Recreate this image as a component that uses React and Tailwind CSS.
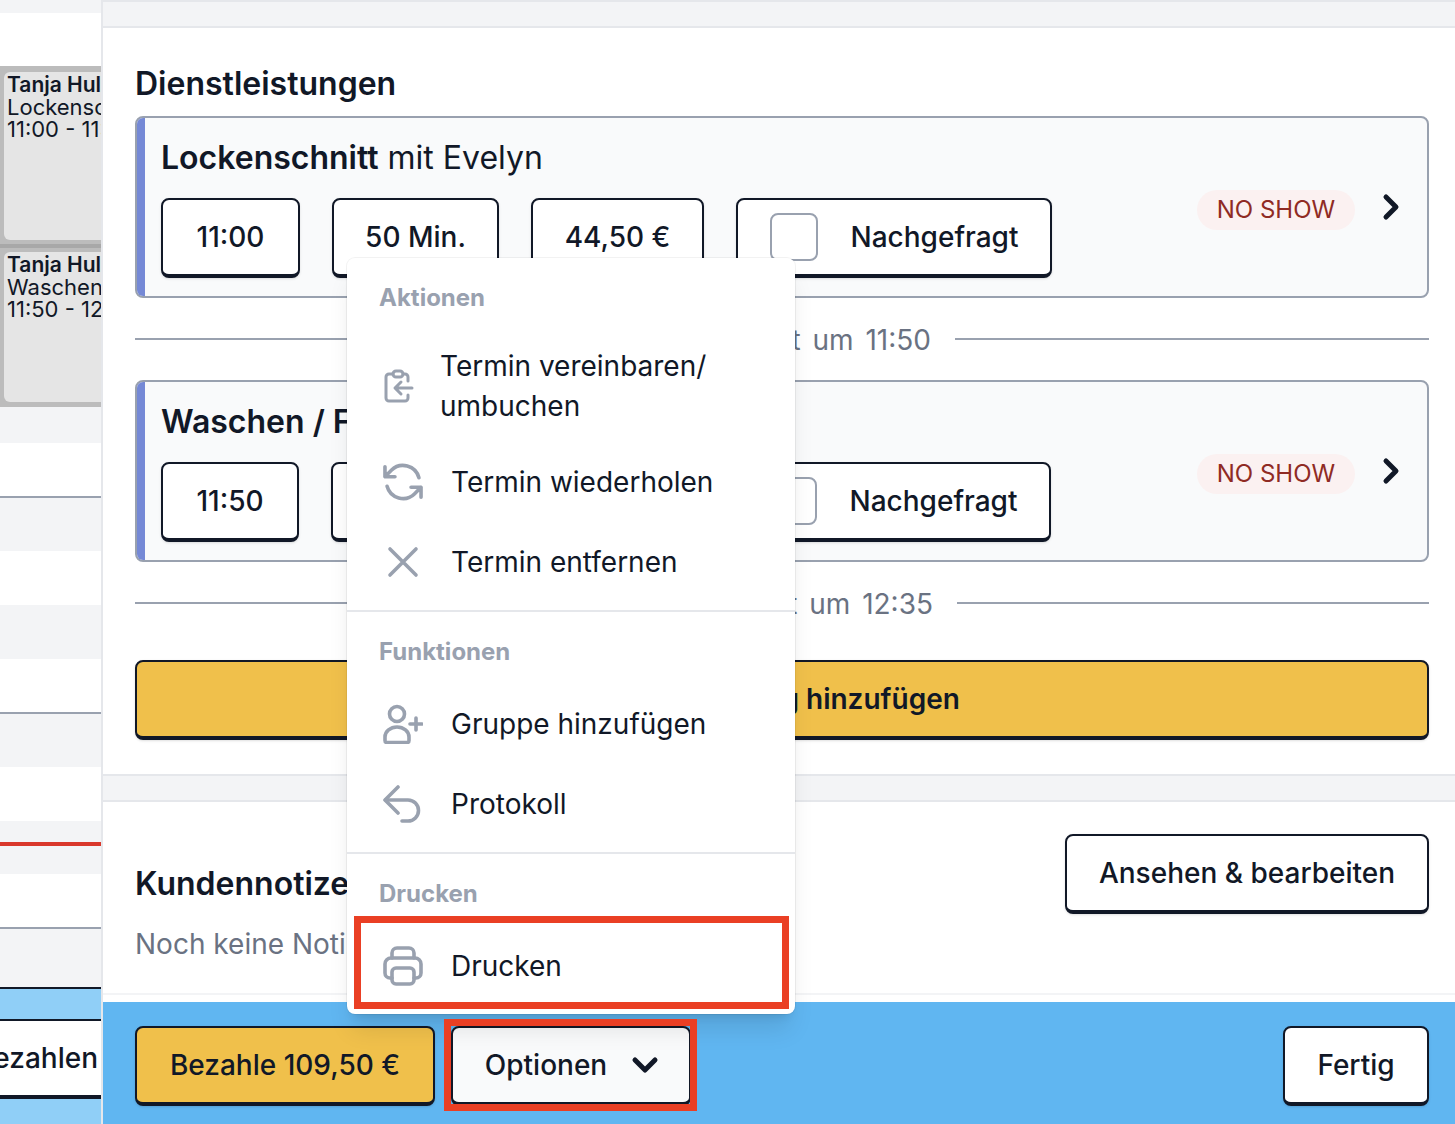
import { ChevronDown, ChevronRight } from "lucide-react";
import { HiOutlineArrowPath } from "react-icons/hi2";

const Btn = ({ className = "bg-white", children }) => (
  <div className={`flex h-[80px] shrink-0 items-center justify-center whitespace-nowrap rounded-lg border-2 border-b-4 border-[#111827] text-[28px] leading-[40px] font-medium text-[#111827] shadow-sm ${className}`}>
    {children}
  </div>
);

const ServiceCard = ({ title, rest, time, duration, price, timeWidth, checkWidth }) => (
  <div className="flex h-[182px] overflow-hidden rounded-lg border-2 border-gray-400 bg-gray-50">
    <div className="w-[8px] shrink-0 bg-[#7589d6]" />
    <div className="flex-1 pt-[20px] pl-[16px]">
      <div className="text-[32px] leading-[40px] text-[#111827]">
        <span className="font-semibold">{title}</span> {rest}
      </div>
      <div className="mt-[20px] flex gap-[32px]">
        <Btn className={`bg-white ${timeWidth}`}>{time}</Btn>
        <Btn className="w-[167px] bg-white">{duration}</Btn>
        <Btn className="w-[173px] bg-white">{price}</Btn>
        <Btn className={`gap-[33px] bg-white ${checkWidth}`}>
          <span className="h-[48px] w-[48px] rounded-lg border-2 border-gray-400 bg-white" />
          Nachgefragt
        </Btn>
      </div>
    </div>
    <div className="flex h-[112px] items-end gap-[16px] pr-[16px]">
      <div className="flex h-[40px] w-[158px] items-center justify-center rounded-full bg-[#fbf1f1] text-[24px] text-[#8f2b24]">NO SHOW</div>
      <ChevronRight className="mb-[3px] h-[40px] w-[40px] text-[#111827]" strokeWidth={3} />
    </div>
  </div>
);

const Divider = ({ label, lineWidth }) => (
  <div className="flex h-[82px] items-center gap-[24px]">
    <div className="h-[2px] flex-1 bg-gray-400" />
    <span className="pt-[2px] text-[28px] leading-[40px] whitespace-nowrap text-gray-500 [word-spacing:4px]">{label}</span>
    <div className={`h-[2px] bg-gray-400 ${lineWidth}`} />
  </div>
);

const Band = () => <div className="h-[28px] border-y-2 border-gray-200 bg-gray-100" />;

const MenuHead = ({ children }) => (
  <div className="h-[40px] pl-[32px] text-[24px] leading-[40px] font-bold text-gray-400">{children}</div>
);

const MenuItem = ({ icon, children }) => (
  <div className="flex h-[80px] items-center gap-[28px] pl-[36px] text-[28px] text-[#111827]">
    <span className="flex h-[40px] w-[40px] shrink-0 items-center justify-center text-gray-400">{icon}</span>
    {children}
  </div>
);

const Stroke = ({ children }) => (
  <svg viewBox="0 0 40 40" fill="none" stroke="currentColor" strokeWidth="3.6" strokeLinecap="round" strokeLinejoin="round" className="h-[40px] w-[40px]">
    {children}
  </svg>
);

const ClipboardBack = () => (
  <svg viewBox="0 0 30 34" fill="none" stroke="currentColor" strokeWidth="3" strokeLinecap="round" strokeLinejoin="round" className="h-[34px] w-[30px] shrink-0 text-gray-400">
    <path d="M9 5H5a3 3 0 0 0-3 3v21a3 3 0 0 0 3 3h16a3 3 0 0 0 3-3v-3" />
    <path d="M19 5h2a3 3 0 0 1 3 3v4" />
    <rect x="9" y="2" width="10" height="6" rx="3" />
    <path d="M28 19H12M17 13l-6 6 6 6" />
  </svg>
);

const Appointment = ({ className, service, time }) => (
  <div className={`w-[140px] bg-[#bcbcbc] pl-[4px] ${className}`}>
    <div className="h-full overflow-hidden rounded-md bg-[#e5e5e5] pt-[2px] pl-[3px] text-[22px] leading-[22px] whitespace-nowrap text-[#111827]">
      <div className="text-[21px] font-semibold">Tanja Huller</div>
      <div>{service}</div>
      <div>{time}</div>
    </div>
  </div>
);

const Calendar = () => (
  <div className="flex w-[101px] shrink-0 flex-col overflow-hidden">
    <div className="h-[13px] bg-gray-100" />
    <div className="h-[53px] bg-white" />
    <Appointment className="h-[178px] pt-[6px] pb-[4px]" service="Lockenschnitt" time="11:00 - 11:50" />
    <Appointment className="h-[163px] border-t-4 border-[#a8a8a8] pt-[4px] pb-[5px]" service="Waschen / Föhnen" time="11:50 - 12:35" />
    <div className="h-[36px] bg-gray-100" />
    <div className="h-[55px] border-b-2 border-gray-400 bg-white" />
    <div className="h-[53px] bg-gray-100" />
    <div className="h-[54px] bg-white" />
    <div className="h-[54px] bg-gray-100" />
    <div className="h-[55px] border-b-2 border-gray-400 bg-white" />
    <div className="h-[53px] bg-gray-100" />
    <div className="h-[54px] bg-white" />
    <div className="h-[53px] bg-gray-100 pt-[21px]">
      <div className="h-[4px] bg-[#d9382c]" />
    </div>
    <div className="h-[55px] border-b-2 border-gray-400 bg-white" />
    <div className="h-[58px] bg-gray-100" />
    <div className="flex-1 border-t-2 border-[#111827] bg-[#90cff7] pt-[30px]">
      <div className="flex h-[80px] items-center justify-end border-t-2 border-b-4 border-[#111827] bg-white pr-[3px] text-[28px] font-medium whitespace-nowrap text-[#111827]">
        Bezahlen
      </div>
    </div>
  </div>
);

export default function App() {
  return (
    <div className="relative flex h-[1124px] w-[1455px] overflow-hidden bg-white font-[Inter,sans-serif]">
      <Calendar />
      <div className="w-[2px] shrink-0 bg-gray-200" />

      <div className="flex flex-1 flex-col">
        <Band />
        <section className="pt-[36px] pr-[26px] pb-[34px] pl-[32px]">
          <h2 className="mb-[12px] text-[32px] leading-[40px] font-semibold text-[#111827]">Dienstleistungen</h2>
          <ServiceCard title="Lockenschnitt" rest="mit Evelyn" time="11:00" duration="50 Min." price="44,50 €" timeWidth="w-[139px]" checkWidth="w-[316px]" />
          <Divider label="Termin endet um 11:50" lineWidth="w-[474px]" />
          <ServiceCard title="Waschen / Föhnen" rest="mit Evelyn" time="11:50" duration="45 Min." price="65,00 €" timeWidth="w-[138px]" checkWidth="w-[316px]" />
          <Divider label="Termin endet um 12:35" lineWidth="w-[472px]" />
          <Btn className="mt-[16px] bg-[#f0c04b] font-semibold">Dienstleistung hinzufügen</Btn>
        </section>
        <Band />
        <section className="flex h-[193px] items-start justify-between border-b-2 border-gray-100 pt-[32px] pr-[26px] pl-[32px]">
          <div className="pt-[30px]">
            <h2 className="text-[32px] leading-[40px] font-semibold text-[#111827]">Kundennotizen</h2>
            <p className="mt-[20px] text-[28px] leading-[40px] text-gray-500">Noch keine Notizen</p>
          </div>
          <Btn className="w-[364px] bg-white">Ansehen &amp; bearbeiten</Btn>
        </section>
        <div className="h-[7px]" />
        <footer className="flex flex-1 items-start justify-between bg-[#60b6f1] pt-[24px] pr-[26px] pl-[32px]">
          <div className="flex gap-[16px]">
            <Btn className="w-[300px] bg-[#f0c04b]">Bezahle 109,50 €</Btn>
            <Btn className="w-[240px] gap-[18px] bg-gray-50 pl-[8px]">
              Optionen
              <ChevronDown className="h-[40px] w-[40px]" strokeWidth={3} />
            </Btn>
          </div>
          <Btn className="w-[146px] bg-white">Fertig</Btn>
        </footer>
      </div>

      {/* offenes Options-Menü */}
      <div className="absolute top-[258px] left-[347px] w-[448px] rounded-lg bg-white shadow-xl ring-1 ring-black/5">
        <div className="border-b-2 border-gray-200 pt-[20px] pb-[8px]">
          <MenuHead>Aktionen</MenuHead>
          <div className="mt-[12px] flex h-[112px] items-center gap-[26px] pl-[37px] text-[28px] leading-[40px] text-[#111827]">
            <ClipboardBack />
            <span>Termin vereinbaren/<br />umbuchen</span>
          </div>
          <MenuItem icon={<HiOutlineArrowPath className="h-[48px] w-[48px] shrink-0 -scale-x-100" strokeWidth={1.8} />}>Termin wiederholen</MenuItem>
          <MenuItem icon={<Stroke><path d="M7 7l26 26M33 7 7 33" /></Stroke>}>Termin entfernen</MenuItem>
        </div>
        <div className="border-b-2 border-gray-200 pt-[20px] pb-[8px]">
          <MenuHead>Funktionen</MenuHead>
          <div className="mt-[12px]">
            <MenuItem
              icon={
                <Stroke>
                  <circle cx="14" cy="10" r="7.5" />
                  <path d="M2 33a12 10 0 0 1 24 0v3.5a2 2 0 0 1-2 2H4a2 2 0 0 1-2-2z" />
                  <path d="M33 14v12M27 20h12" />
                </Stroke>
              }
            >
              Gruppe hinzufügen
            </MenuItem>
            <MenuItem
              icon={
                <Stroke>
                  <path d="M2.5 16H25a10.5 10.5 0 0 1 0 21h-6" />
                  <path d="M15 3 2 16l13 13" />
                </Stroke>
              }
            >
              Protokoll
            </MenuItem>
          </div>
        </div>
        <div className="pt-[20px] pb-[8px]">
          <MenuHead>Drucken</MenuHead>
          <div className="mt-[12px]">
            <MenuItem
              icon={
                <Stroke>
                  <path d="M9 32H7a5 5 0 0 1-5-5v-9a6 6 0 0 1 6-6h24a6 6 0 0 1 6 6v9a5 5 0 0 1-5 5h-2" />
                  <path d="M9 12V7a5 5 0 0 1 5-5h12a5 5 0 0 1 5 5v5" />
                  <rect x="9" y="22" width="22" height="16" rx="4" />
                </Stroke>
              }
            >
              Drucken
            </MenuItem>
          </div>
        </div>
      </div>

      {/* rote Markierungen */}
      <div className="absolute top-[916px] left-[354px] h-[93px] w-[435px] border-[7px] border-[#ea3f24]" />
      <div className="absolute top-[1019px] left-[444px] h-[92px] w-[253px] border-[7px] border-[#ea3f24]" />
    </div>
  );
}
